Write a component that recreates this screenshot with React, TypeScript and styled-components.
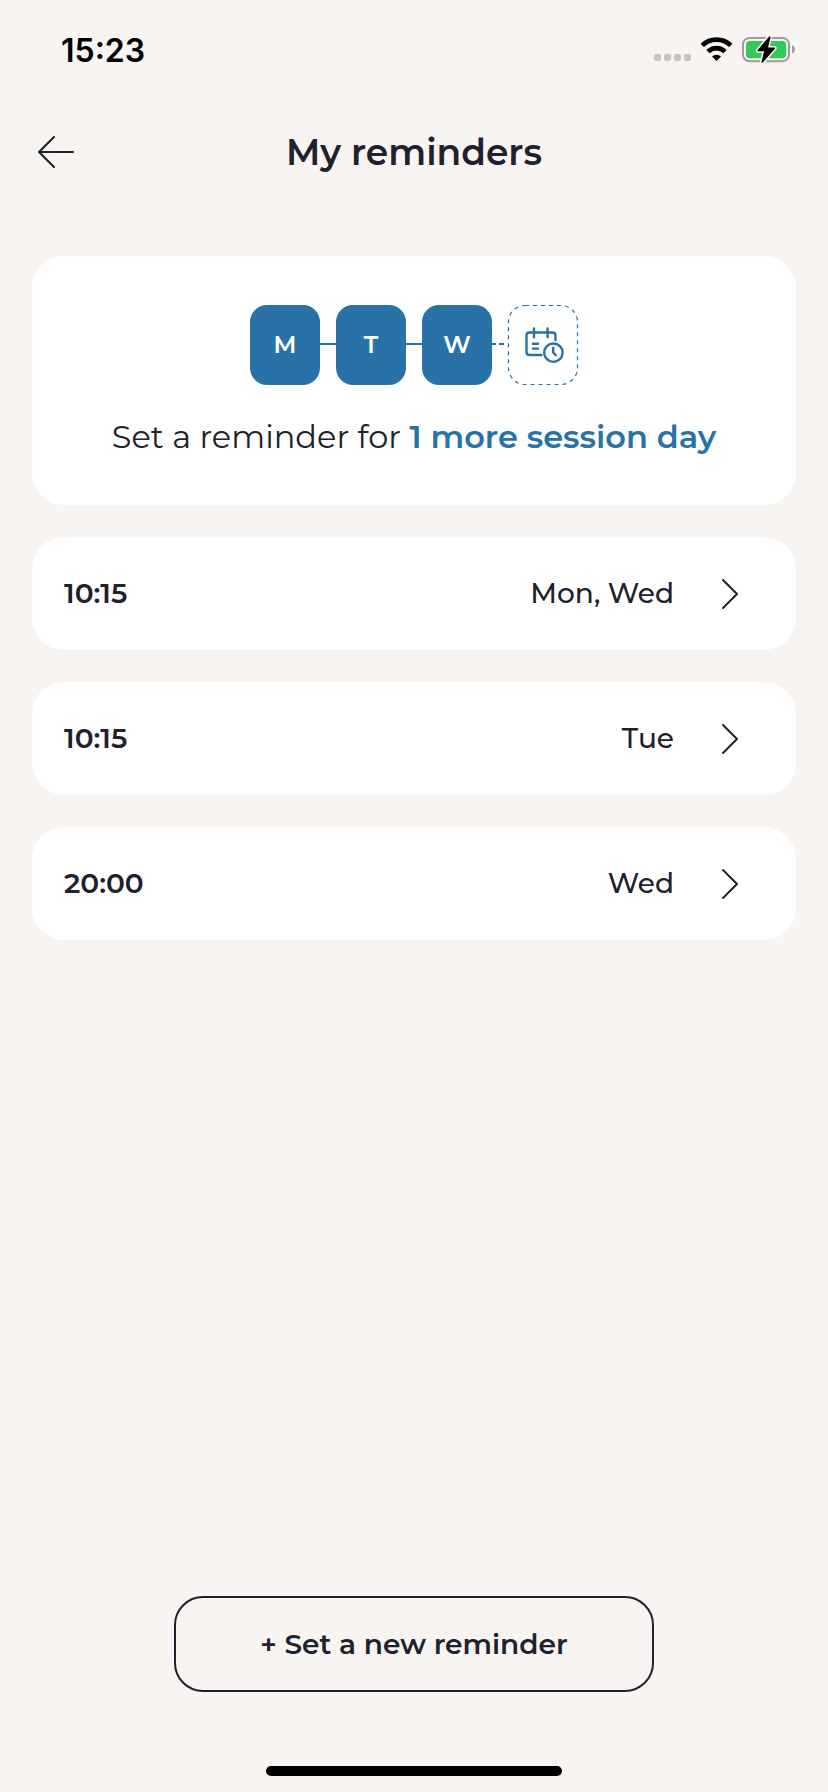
import React from "react";
import styled, { createGlobalStyle } from "styled-components";

const ink = "#20212c";
const blue = "#2872a8";

const GlobalStyle = createGlobalStyle`
  * { box-sizing: border-box; }
  body { margin: 0; background: #f7f4f2; }
`;

const Screen = styled.div`
  width: 828px;
  height: 1792px;
  display: flex;
  flex-direction: column;
  background: #f7f4f2;
  color: ${ink};
  font-family: Montserrat, Inter, "Liberation Sans", sans-serif;
`;

const Label = styled.span<{ $size: number; $weight: number; $color?: string }>`
  font-size: ${(p) => p.$size}px;
  font-weight: ${(p) => p.$weight};
  color: ${(p) => p.$color ?? "inherit"};
  line-height: 40px;
  white-space: pre;
`;

const StatusBar = styled.header`
  height: 100px;
  padding: 0 33px 0 61px;
  display: flex;
  justify-content: space-between;
  align-items: center;
  color: #000;
`;

const Clock = styled(Label)`
  margin-top: 2px;
  font-family: Inter, "Liberation Sans", sans-serif;
`;

const StatusIcons = styled.svg`
  display: block;
  width: 142px;
  height: 28px;
`;

const TitleBar = styled.div`
  height: 104px;
  padding: 0 36px;
  display: grid;
  grid-template-columns: 40px 1fr 40px;
  align-items: center;
  justify-items: center;
`;

const BackButton = styled.button`
  width: 40px;
  height: 40px;
  padding: 0;
  border: 0;
  background: none;
  display: block;
`;

const Title = styled.h1`
  margin: 0;
  display: flex;
`;

const Content = styled.main`
  flex: 1;
  padding: 52px 32px 0;
  display: flex;
  flex-direction: column;
  gap: 32px;
`;

const Card = styled.section`
  border-radius: 32px;
  background: #fff;
`;

const Progress = styled(Card)`
  height: 249px;
  padding-top: 49px;
  display: flex;
  flex-direction: column;
  align-items: center;
`;

const Days = styled.div`
  display: flex;
  align-items: center;
`;

const Day = styled.div`
  width: 70px;
  height: 80px;
  border-radius: 17px;
  background: ${blue};
  color: #fff;
  display: flex;
  align-items: center;
  justify-content: center;
`;

const Link = styled.i`
  width: 16px;
  height: 2px;
  margin-bottom: 2px;
  background: ${blue};
`;

const Drawing = styled.svg`
  display: block;
  overflow: visible;
`;

const DashedLink = styled(Drawing)`
  margin-bottom: 2px;
`;

const Message = styled.p`
  margin: 32px 0 0;
  display: flex;
`;

const Row = styled(Card)`
  height: 113px;
  padding: 0 57px 2px 32px;
  display: flex;
  align-items: center;
`;

const RowDays = styled(Label)`
  margin-left: auto;
`;

const Chevron = styled.svg`
  display: block;
  margin: 2px 0 0 46px;
  width: 19px;
  height: 34px;
`;

const Footer = styled.footer`
  display: flex;
  flex-direction: column;
  align-items: center;
  padding-bottom: 16px;
`;

const NewButton = styled.button`
  width: 480px;
  height: 96px;
  padding: 0;
  border: 2px solid ${ink};
  border-radius: 29px;
  background: none;
  color: ${ink};
  font-family: inherit;
  display: flex;
  align-items: center;
  justify-content: center;
`;

const HomeIndicator = styled.div`
  width: 296px;
  height: 10px;
  margin-top: 74px;
  border-radius: 5px;
  background: #000;
`;

const week = ["M", "T", "W"];

const reminders = [
  { time: "10:15", days: "Mon, Wed" },
  { time: "10:15", days: "Tue" },
  { time: "20:00", days: "Wed" },
];

const bolt = "M768.8 37 L757 50.6 H764 L761.2 62 L773.4 48.2 H766.2 Z";

const Status = () => (
  <StatusIcons viewBox="652 36 142 28">
    {[653, 663, 673, 683].map((x) => (
      <rect key={x} x={x} y="54" width="7" height="7" rx="2" fill="#c6c3c1" />
    ))}
    <g fill="none" stroke="#000" strokeWidth="4.8">
      <path d="M701.2 45.4 A20.5 20.5 0 0 1 729.8 45.4" />
      <path d="M707 51.6 A12 12 0 0 1 724 51.6" />
    </g>
    <path d="M715.5 61 L711 56.5 A6.5 6.5 0 0 1 720 56.5 Z" />
    <rect x="742" y="38" width="46" height="23.2" rx="6.5" fill="none" stroke="#a09c9c" strokeWidth="2" />
    <rect x="745" y="41" width="40.2" height="17.2" rx="4" fill="#34c759" />
    <path d="M791 45.2 C795 46.6 795 52.4 791 53.8 Z" fill="#a09c9c" />
    <path d={bolt} stroke="#f7f4f2" strokeWidth="4.5" strokeLinejoin="round" />
    <path d={bolt} stroke="#000" strokeWidth="1.4" strokeLinejoin="round" />
  </StatusIcons>
);

const PendingDay = () => (
  <Drawing width="70" height="80" viewBox="508 305 70 80" fill="none" stroke={blue}>
    <rect x="508.5" y="305.5" width="69" height="79" rx="16.5" strokeDasharray="4 4" strokeWidth="1.2" />
    <g strokeWidth="2.4" strokeLinecap="round" strokeLinejoin="round">
      <path d="M541.5 355 H529.5 Q526.5 355 526.5 352 V335.5 Q526.5 332.5 529.5 332.5 H552.5 Q555.5 332.5 555.5 335.5 V340" />
      <path d="M534 328.4 V337.2 M547.6 328.4 V337.2 M533 343.7 H538 M533 348.6 H538" />
      <circle cx="553.4" cy="352.7" r="9.2" />
      <path d="M553.2 347.8 V352.4 L555.8 355.2" />
    </g>
  </Drawing>
);

export default function App() {
  return (
    <Screen>
      <GlobalStyle />
      <StatusBar>
        <Clock $size={32} $weight={600}>15:23</Clock>
        <Status />
      </StatusBar>
      <TitleBar>
        <BackButton aria-label="Back">
          <Drawing width="40" height="40" viewBox="36 132 40 40" fill="none" stroke={ink} strokeWidth="2.1" strokeLinecap="round" strokeLinejoin="round">
            <path d="M73 152 H39 M54 137 L39 152 L54 167" />
          </Drawing>
        </BackButton>
        <Title>
          <Label $size={36} $weight={600}>My reminders</Label>
        </Title>
      </TitleBar>
      <Content>
        <Progress>
          <Days>
            {week.map((d, i) => (
              <React.Fragment key={d}>
                {i > 0 && <Link />}
                <Day>
                  <Label $size={24} $weight={600}>{d}</Label>
                </Day>
              </React.Fragment>
            ))}
            <DashedLink width="16" height="2" viewBox="492 343 16 2">
              <path d="M492 344 H496 M499 344 H504" stroke={blue} strokeWidth="2" />
            </DashedLink>
            <PendingDay />
          </Days>
          <Message>
            <Label $size={32} $weight={400}>Set a reminder for </Label>
            <Label $size={32} $weight={600} $color={blue}>1 more session day</Label>
          </Message>
        </Progress>
        {reminders.map((r, i) => (
          <Row key={i}>
            <Label $size={28} $weight={600}>{r.time}</Label>
            <RowDays $size={28} $weight={500}>{r.days}</RowDays>
            <Chevron viewBox="720 577 19 34" fill="none" stroke={ink} strokeWidth="2" strokeLinecap="round" strokeLinejoin="round">
              <path d="M723 580 L737 594 L723 608" />
            </Chevron>
          </Row>
        ))}
      </Content>
      <Footer>
        <NewButton>
          <Label $size={28} $weight={600}>+ Set a new reminder</Label>
        </NewButton>
        <HomeIndicator />
      </Footer>
    </Screen>
  );
}
